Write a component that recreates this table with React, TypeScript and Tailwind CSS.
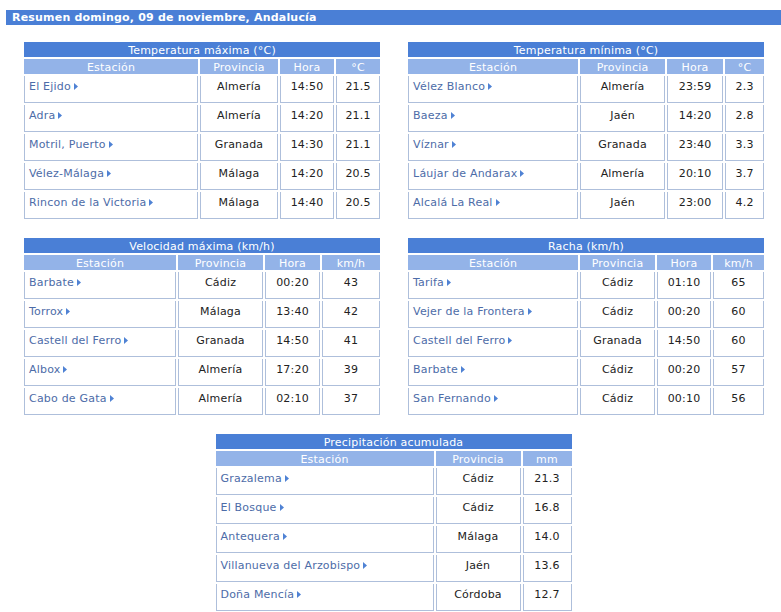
import React from 'react';

type Row = string[];

type Table = {
    title: string;
    heads: string[];
    cols: string[];
    rows: Row[];
};

const tMax: Table = {
    title: 'Temperatura máxima (°C)',
    heads: ['Estación', 'Provincia', 'Hora', '°C'],
    cols: ['w-[174px]', 'w-[78px]', 'w-[54px]', 'w-[44px]'],
    rows: [
        ['El Ejido', 'Almería', '14:50', '21.5'],
        ['Adra', 'Almería', '14:20', '21.1'],
        ['Motril, Puerto', 'Granada', '14:30', '21.1'],
        ['Vélez-Málaga', 'Málaga', '14:20', '20.5'],
        ['Rincon de la Victoria', 'Málaga', '14:40', '20.5'],
    ],
};

const tMin: Table = {
    title: 'Temperatura mínima (°C)',
    heads: ['Estación', 'Provincia', 'Hora', '°C'],
    cols: ['w-[170px]', 'w-[85px]', 'w-[56px]', 'w-[39px]'],
    rows: [
        ['Vélez Blanco', 'Almería', '23:59', '2.3'],
        ['Baeza', 'Jaén', '14:20', '2.8'],
        ['Víznar', 'Granada', '23:40', '3.3'],
        ['Láujar de Andarax', 'Almería', '20:10', '3.7'],
        ['Alcalá La Real', 'Jaén', '23:00', '4.2'],
    ],
};

const vMax: Table = {
    title: 'Velocidad máxima (km/h)',
    heads: ['Estación', 'Provincia', 'Hora', 'km/h'],
    cols: ['w-[152px]', 'w-[85px]', 'w-[55px]', 'w-[58px]'],
    rows: [
        ['Barbate', 'Cádiz', '00:20', '43'],
        ['Torrox', 'Málaga', '13:40', '42'],
        ['Castell del Ferro', 'Granada', '14:50', '41'],
        ['Albox', 'Almería', '17:20', '39'],
        ['Cabo de Gata', 'Almería', '02:10', '37'],
    ],
};

const racha: Table = {
    title: 'Racha (km/h)',
    heads: ['Estación', 'Provincia', 'Hora', 'km/h'],
    cols: ['w-[170px]', 'w-[75px]', 'w-[54px]', 'w-[51px]'],
    rows: [
        ['Tarifa', 'Cádiz', '01:10', '65'],
        ['Vejer de la Frontera', 'Cádiz', '00:20', '60'],
        ['Castell del Ferro', 'Granada', '14:50', '60'],
        ['Barbate', 'Cádiz', '00:20', '57'],
        ['San Fernando', 'Cádiz', '00:10', '56'],
    ],
};

const precip: Table = {
    title: 'Precipitación acumulada',
    heads: ['Estación', 'Provincia', 'mm'],
    cols: ['w-[218px]', 'w-[85px]', 'w-[49px]'],
    rows: [
        ['Grazalema', 'Cádiz', '21.3'],
        ['El Bosque', 'Cádiz', '16.8'],
        ['Antequera', 'Málaga', '14.0'],
        ['Villanueva del Arzobispo', 'Jaén', '13.6'],
        ['Doña Mencía', 'Córdoba', '12.7'],
    ],
};

const Arrow = () => (
    <svg width="4" height="7" viewBox="0 0 4 7" className="inline-block ml-[3px] align-[0px]">
        <polygon points="0,0 4,3.5 0,7" fill="#4f82d4" />
    </svg>
);

const DataTable = ({ t, className = '' }: { t: Table; className?: string }) => (
    <table className={`table-fixed border-separate border-spacing-[2px] w-[360px] ${className}`}>
        <colgroup>
            {t.cols.map((c, i) => (
                <col key={i} className={c} />
            ))}
        </colgroup>
        <thead>
            <tr>
                <th colSpan={t.heads.length} className="bg-[#4a7fd6] text-white font-normal text-center h-[15px] p-0 pt-[2px] leading-[13px]">
                    {t.title}
                </th>
            </tr>
            <tr>
                {t.heads.map((h) => (
                    <th key={h} className="bg-[#93b3e8] text-white font-normal text-center h-[15px] p-0 pt-[2px] leading-[13px]">
                        {h}
                    </th>
                ))}
            </tr>
        </thead>
        <tbody>
            {t.rows.map((r, ri) => (
                <tr key={ri}>
                    {r.map((v, ci) => (
                        <td
                            key={ci}
                            className={
                                ci === 0
                                    ? 'align-top border-x border-b border-[#aebfdb] pl-[4px] pt-[4px] pb-[9px] leading-[13px] text-left text-[#4d6ca8] whitespace-nowrap'
                                    : 'align-top border-x border-b border-[#aebfdb] pt-[4px] pb-[9px] leading-[13px] text-center text-[#222]'
                            }
                        >
                            {v}
                            {ci === 0 && <Arrow />}
                        </td>
                    ))}
                </tr>
            ))}
        </tbody>
    </table>
);

export default function App() {
    return (
        <div className="bg-white min-h-screen pt-[10px] pl-[6px] font-['DejaVu_Sans',Verdana,sans-serif] text-[11px] tracking-[0.2px]">
            <div className="bg-[#4a7fd6] text-white font-bold h-[15px] leading-[15px] pl-[6px]">
                Resumen domingo, 09 de noviembre, Andalucía
            </div>

            <div className="flex gap-[24px] pl-[16px] mt-[15px]">
                <DataTable t={tMax} />
                <DataTable t={tMin} />
            </div>

            <div className="flex gap-[24px] pl-[16px] mt-[15px]">
                <DataTable t={vMax} />
                <DataTable t={racha} />
            </div>

            <div className="mt-[15px] w-[775px]">
                <DataTable t={precip} className="mx-auto" />
            </div>
        </div>
    );
}
